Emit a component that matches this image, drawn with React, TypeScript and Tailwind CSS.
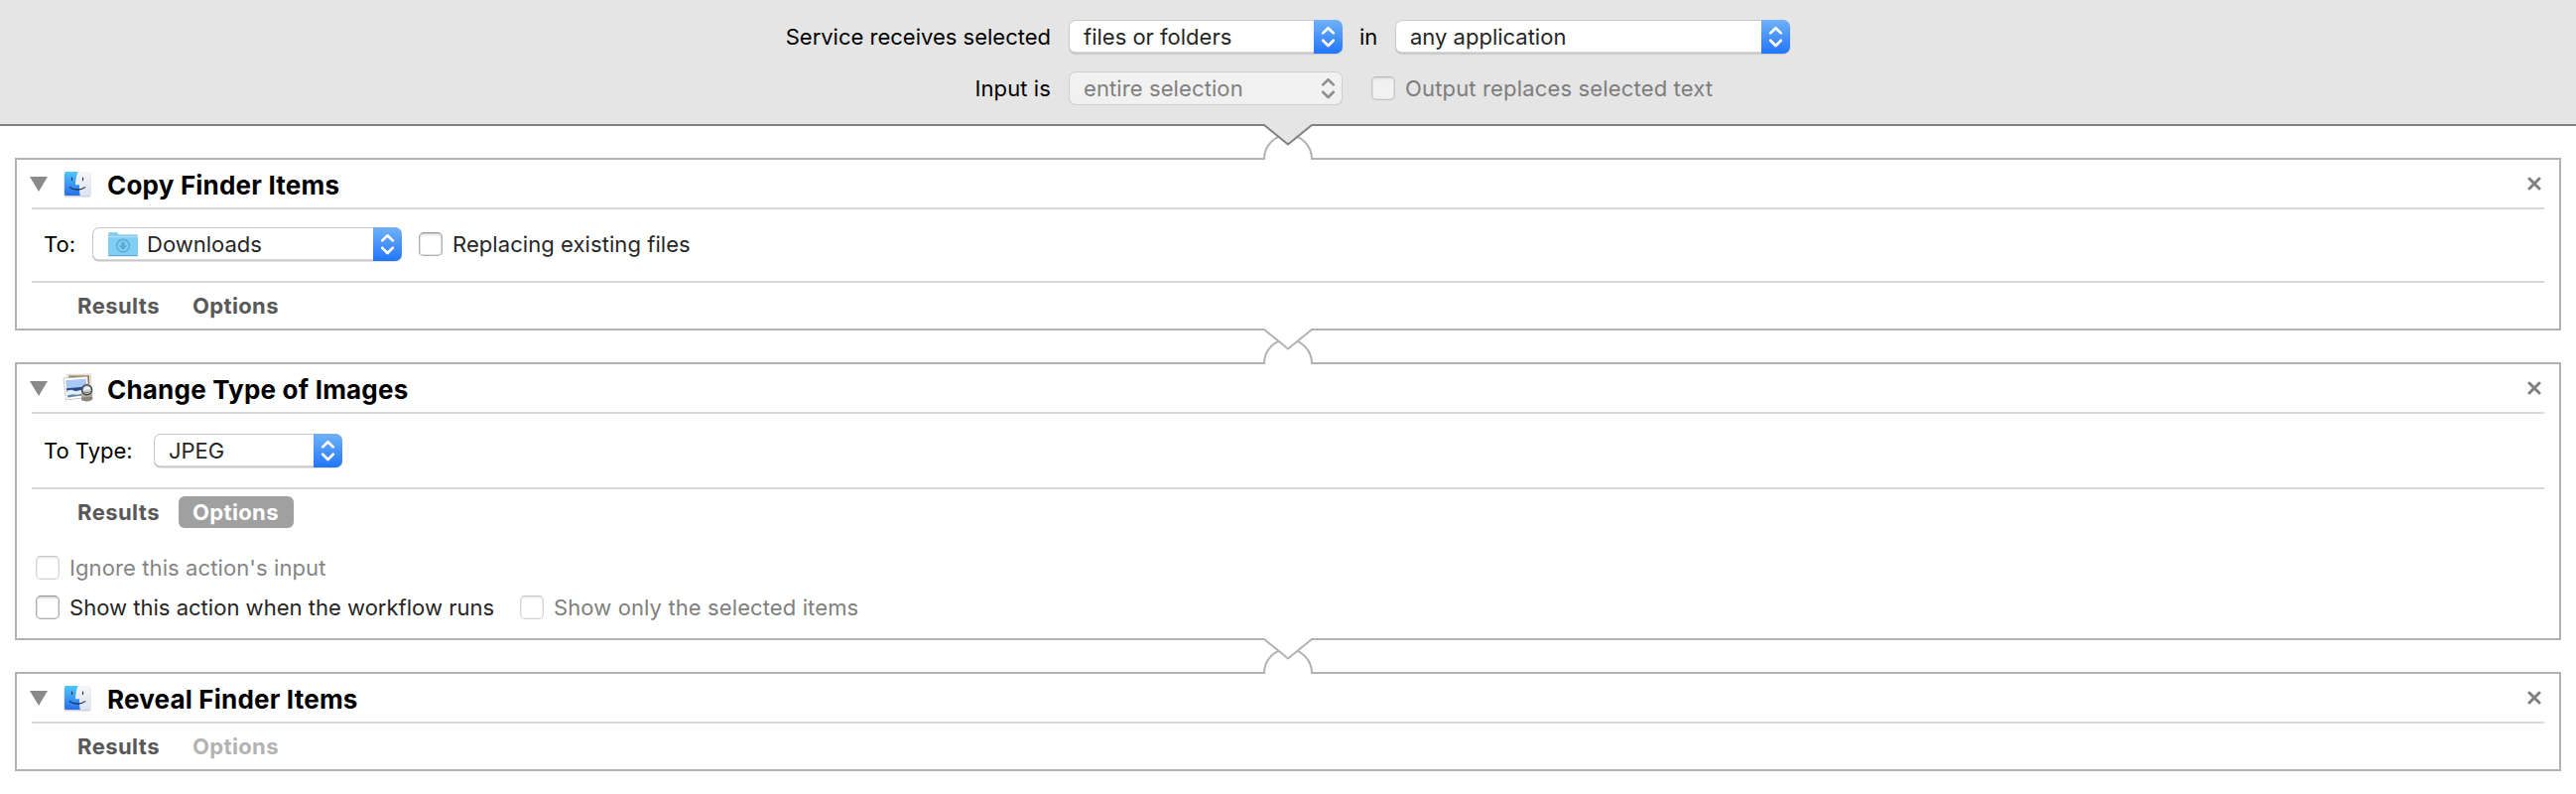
import React, { useId } from "react";

const FONT = "font-['Inter','Liberation_Sans',sans-serif]";

function Chevrons({ className }: { className: string }) {
  return (
    <svg viewBox="0 0 29 34" className={`h-[34px] w-[29px] shrink-0 ${className}`} fill="none" stroke="currentColor" strokeWidth="2.7" strokeLinecap="round" strokeLinejoin="round">
      <path d="M9.200 13.400 14.500 8.200l5.300 5.200M9.200 20.800l5.300 5.200 5.300-5.200" />
    </svg>
  );
}

function Select({ width, children, disabled = false }: { width: string; children: React.ReactNode; disabled?: boolean }) {
  return (
    <div
      className={`flex h-[34px] shrink-0 items-center overflow-hidden rounded-[7px] ${width} ${
        disabled
          ? "bg-[#f1f1f1] text-[#808080] shadow-[inset_0_0_0_1px_#cfcfcf,inset_0_-1px_0_0_#c4c4c4]"
          : "bg-white text-[#262626] shadow-[inset_0_0_0_1px_#c9c9c9,inset_0_-2px_0_-0.5px_#b0b0b0,0_1px_1px_rgba(0,0,0,0.12)]"
      }`}
    >
      <div className="flex flex-1 items-center pl-[15px]">{children}</div>
      <Chevrons className={disabled ? "text-[#909090]" : "bg-linear-to-b from-[#70b1f6] to-[#1f74fa] text-white"} />
    </div>
  );
}

const checkboxTones = {
  normal: "border-[#b0b0b0] border-t-[#989898] bg-white shadow-[inset_0_0_0_0.5px_#c4c4c4,inset_0_2px_2px_rgba(0,0,0,0.12)]",
  disabled: "border-[#d4d4d4] border-t-[#c8c8c8] bg-white shadow-[inset_0_0_0_0.5px_#e2e2e2,inset_0_2px_2px_rgba(0,0,0,0.06)]",
  toolbar: "border-[#c4c4c4] border-t-[#b8b8b8] bg-[#f1f1f1] shadow-[inset_0_0_0_0.5px_#d4d4d4,inset_0_2px_2px_rgba(0,0,0,0.06)]",
};

function Checkbox({ tone = "normal" }: { tone?: "normal" | "disabled" | "toolbar" }) {
  return <span className={`h-6 w-6 shrink-0 rounded-[5px] border-[1.5px] ${checkboxTones[tone]}`} />;
}

function FinderIcon() {
  const id = useId();
  return (
    <svg viewBox="0 0 30 28" className="mt-0.5 h-7 w-[30px]">
      <defs>
        <linearGradient id={`${id}b`} x1="0" y1="0" x2="0" y2="1">
          <stop offset="0" stopColor="#4fc6fa" />
          <stop offset="1" stopColor="#2a6df0" />
        </linearGradient>
        <linearGradient id={`${id}w`} x1="0" y1="0" x2="0" y2="1">
          <stop offset="0" stopColor="#f6f6f8" />
          <stop offset="1" stopColor="#dbe4f0" />
        </linearGradient>
      </defs>
      <rect x="1.500" y="2" width="27" height="24.500" rx="2" fill="#000" opacity=".18" />
      <rect x="2" y="1" width="26" height="24" rx="1.6" fill={`url(#${id}w)`} />
      <path d="M3.600 1H15.600C14 5 13.200 9.500 13 14.200h4c-.2 3.500.1 7.300.8 10.800H3.600A1.600 1.600 0 0 1 2 23.400V2.600A1.600 1.600 0 0 1 3.600 1Z" fill={`url(#${id}b)`} />
      <path d="M9.500 7v2.400M20.500 7v2.400M7.200 16.600c4.300 3.400 11.300 3.400 15.600 0" fill="none" stroke="#1d2b40" strokeWidth="1.100" strokeLinecap="round" />
    </svg>
  );
}

function ImagesIcon() {
  return (
    <svg viewBox="0 0 32 30" className="h-[30px] w-8">
      <path d="M4.500 1.500 28.500 1l.4 19-23 1Z" fill="#fff" stroke="#c8c8c8" strokeWidth=".8" />
      <path d="m6 2.600 21-.4.300 9L8 12Z" fill="#94764a" />
      <path d="m1 5 24-1.500 2 20.500L3.500 27Z" fill="#fff" stroke="#bdbdbd" strokeWidth=".8" />
      <path d="m3.200 7.200 20.500-1.500L25 21.500 5.200 24.500Z" fill="#a8c8f5" />
      <path d="m4 15.200 20.300-1.700.3 3.500-20.300 2Z" fill="#274a8c" />
      <path d="m4.300 17.600 5-.9 4 1.600 5-1.400 6.500.2.300 4.600L5.200 24.500Z" fill="#e6eef5" />
      <path d="m5 22.400 5-1.200 5 .5 4-1 .5 1.800L5.200 24.500Z" fill="#6483ab" />
      <path d="m19 18 11.200-1v9.300q-5 3.300-11 .8Z" fill="#b3aa9d" />
      <path d="m19.200 24.500 11-.8v2.800q-5 3.300-11 .8Z" fill="#8a837a" />
      <circle cx="24.600" cy="16.800" r="5" fill="#ccd3d8" stroke="#454545" strokeWidth="1.500" />
      <path d="M21.800 17.300c1.300-2.500 3.700-3 5.500-1.500" stroke="#fff" strokeWidth="1.500" fill="none" />
      <path d="M22.200 18.800c2 1.200 3.500 1 5-.2" stroke="#6c7780" strokeWidth="1.100" fill="none" />
    </svg>
  );
}

function FolderIcon() {
  return (
    <svg viewBox="0 0 30 26" className="ml-px h-[26px] w-[30px]">
      <path d="M0 25V2.500Q0 1 1.500 1H8q1 0 1.700 1l1 1.300H28.500Q30 3.300 30 5v20Z" fill="#8ccdee" />
      <path d="M0 6h30v17.500q0 1.500-1.500 1.500h-27Q0 25 0 23.500Z" fill="#82cdf4" />
      <path d="M0 5.700h30" stroke="#b4e2f8" strokeWidth="1" />
      <path d="M.5 24.600h29" stroke="#62a6cf" strokeWidth="1.200" />
      <circle cx="15" cy="14.600" r="6.300" fill="none" stroke="#5aaad6" strokeWidth="1.500" />
      <path d="M13.300 10.800h3.400v3.600h2.600L15 18.800l-4.300-4.400h2.600Z" fill="#5aaad6" />
    </svg>
  );
}

function Connector({ header = false }: { header?: boolean }) {
  return (
    <div className="relative h-8">
      <svg viewBox="0 0 52 36" className="absolute -top-0.5 left-1/2 h-9 w-[52px] -translate-x-1/2" fill="none" strokeWidth="2">
        <path d="M3 0H49V36H3Z" fill="#fff" />
        <path d="M2 36V35A24 24 0 0 1 50 35V36" stroke="#b2b2b2" />
        <path d="M2 0H50V1L26 20.500 2 1Z" fill={header ? "#e5e5e5" : "#fff"} />
        <path d="M0 1H2L26 20.500 50 1H52" stroke={header ? "#808080" : "#b2b2b2"} />
      </svg>
    </div>
  );
}

function Card({ title, icon, children }: { title: React.ReactNode; icon: React.ReactNode; children: React.ReactNode }) {
  return (
    <section className="mx-[15px] border-2 border-[#b2b2b2] bg-white px-[15px]">
      <header className="flex h-[50px] items-center border-b-2 border-[#d8d8d8]">
        <svg viewBox="0 0 18 15" className="-ml-0.5 h-[15px] w-[18px]">
          <path d="M0 0h18L9 15Z" fill="#8a8a8a" />
        </svg>
        <div className="flex w-[60px] justify-start pl-[15px]">{icon}</div>
        <h2 className="mt-[3px] text-[26px] leading-7 font-bold tracking-[0.2px] whitespace-nowrap text-black">{title}</h2>
        <svg viewBox="0 0 14 14" className="mr-[3px] ml-auto h-3.5 w-3.5">
          <path d="m2 2 10 10M12 2 2 12" stroke="#808080" strokeWidth="3" strokeLinecap="round" />
        </svg>
      </header>
      {children}
    </section>
  );
}

function Tabs({ options = "normal" }: { options?: "normal" | "active" | "disabled" }) {
  const tone = {
    normal: "text-[#595959]",
    active: "bg-[#a0a0a0] text-white",
    disabled: "text-[#b3b3b3]",
  }[options];
  return (
    <div className="flex h-[46px] items-center pl-[46px] text-[22px] font-bold">
      <span className="w-[102px] tracking-[0.45px] text-[#595959]">Results</span>
      <span className={`flex h-8 w-[116px] items-center rounded-md pl-3.5 tracking-[0.35px] ${tone}`}>Options</span>
    </div>
  );
}

export default function App() {
  return (
    <div className={`h-[800px] w-[2596px] overflow-hidden bg-white text-[22px] leading-[26px] whitespace-nowrap text-black ${FONT}`}>
      <div className="flex h-[127px] flex-col gap-[18px] border-b-2 border-[#808080] bg-[#e5e5e5] pt-5">
        <div className="flex items-center">
          <span className="w-[1059px] text-right">Service receives selected</span>
          <span className="w-[18px]" />
          <Select width="w-[276px]">files or folders</Select>
          <span className="w-[53px] pl-[17px]">in</span>
          <Select width="w-[398px]">any application</Select>
        </div>
        <div className="flex items-center">
          <span className="w-[1059px] text-right tracking-[0.1px]">Input is</span>
          <span className="w-[18px]" />
          <Select width="w-[276px]" disabled><span className="tracking-[0.1px]">entire selection</span></Select>
          <span className="w-[29px]" />
          <Checkbox tone="toolbar" />
          <span className="pl-2.5 tracking-[0.16px] text-[#7d7d7d]">Output replaces selected text</span>
        </div>
      </div>
      <Connector header />
      <Card title="Copy Finder Items" icon={<FinderIcon />}>
        <div className="flex h-[74px] items-center border-b-2 border-[#d8d8d8] pb-0.5 pl-3">
          <span className="w-[49px]">To:</span>
          <Select width="w-[312px]">
            <FolderIcon />
            <span className="pl-[9px]">Downloads</span>
          </Select>
          <span className="w-[17px]" />
          <Checkbox />
          <span className="pl-2.5 tracking-[0.07px] text-[#262626]">Replacing existing files</span>
        </div>
        <Tabs />
      </Card>
      <Connector />
      <Card title="Change Type of Images" icon={<ImagesIcon />}>
        <div className="flex h-[76px] items-center border-b-2 border-[#d8d8d8] pl-3">
          <span className="w-[111px]">To Type:</span>
          <Select width="w-[190px]">JPEG</Select>
        </div>
        <Tabs options="active" />
        <div className="flex flex-col gap-4 pt-[21px] pb-[19px] pl-1">
          <div className="flex h-6 items-center">
            <Checkbox tone="disabled" />
            <span className="pl-2.5 tracking-[0.1px] text-[#858585]">Ignore this action's input</span>
          </div>
          <div className="flex h-6 items-center">
            <Checkbox />
            <span className="w-[464px] pl-2.5 tracking-[0.02px] text-[#262626]">Show this action when the workflow runs</span>
            <Checkbox tone="disabled" />
            <span className="pl-2.5 tracking-[0.11px] text-[#808080]">Show only the selected items</span>
          </div>
        </div>
      </Card>
      <Connector />
      <Card title="Reveal Finder Items" icon={<FinderIcon />}>
        <Tabs options="disabled" />
      </Card>
    </div>
  );
}
